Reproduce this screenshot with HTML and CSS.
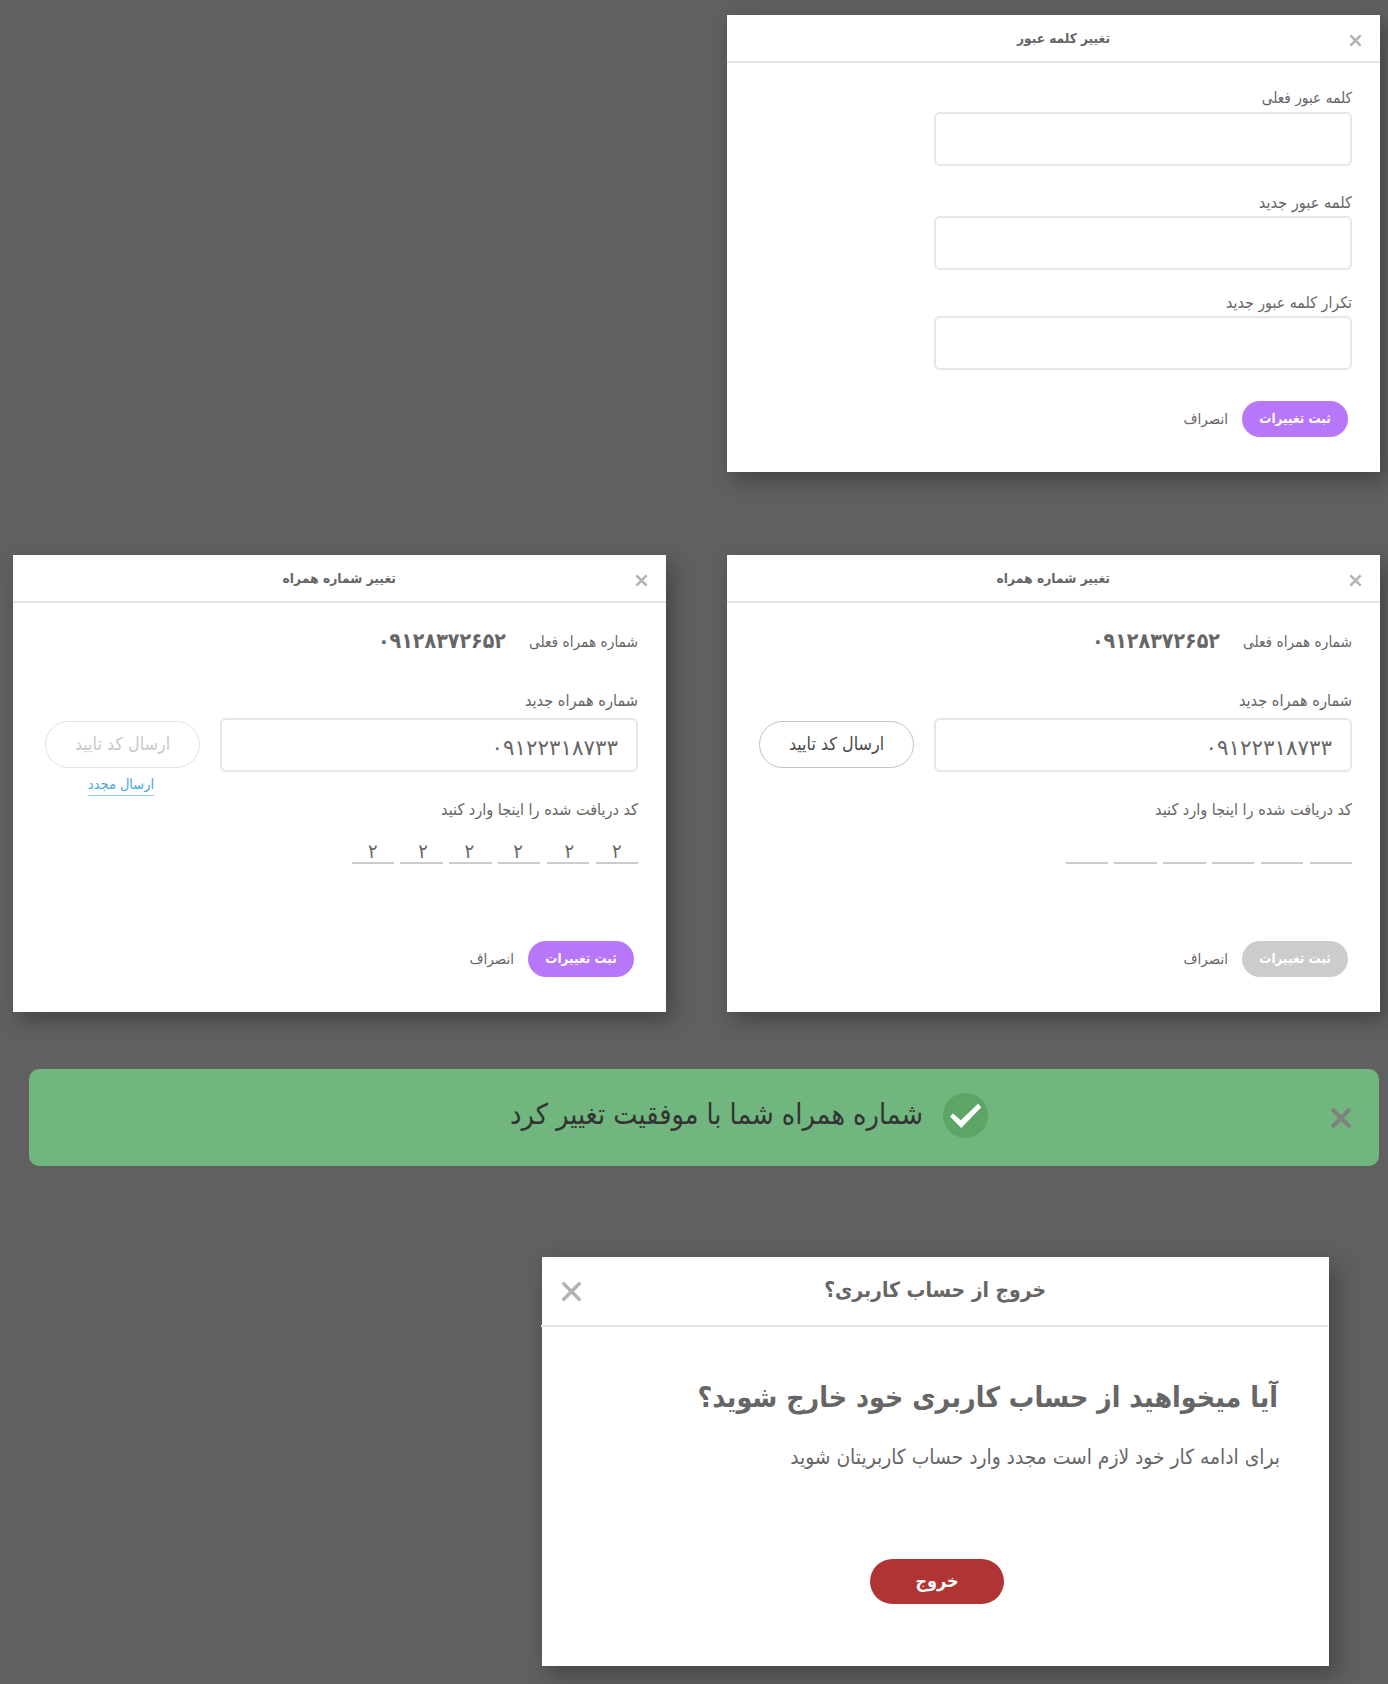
FILE: index.html
```html
<!DOCTYPE html>
<html lang="fa" dir="rtl">
<head>
<meta charset="utf-8">
<title>تنظیمات حساب کاربری</title>
<link rel="stylesheet" href="styles.css">
</head>
<body>
<main class="page">
  <section class="row row-single">
    <article class="card">
      <header class="card-header">
        <svg class="close" viewBox="0 0 13 13"><path d="M1.4 1.4 11.6 11.6M11.6 1.4 1.4 11.6"/></svg>
        <h2 class="card-title">تغییر کلمه عبور</h2>
      </header>
      <div class="card-body">
        <div class="field">
          <label class="label label-current">کلمه عبور فعلی</label>
          <div class="input"></div>
        </div>
        <div class="field field-new">
          <label class="label">کلمه عبور جدید</label>
          <div class="input"></div>
        </div>
        <div class="field field-repeat">
          <label class="label label-repeat">تکرار کلمه عبور جدید</label>
          <div class="input"></div>
        </div>
        <div class="actions">
          <span class="btn">ثبت تغییرات</span>
          <span class="cancel">انصراف</span>
        </div>
      </div>
    </article>
  </section>

  <section class="row row-double">
    <article class="card">
      <header class="card-header">
        <svg class="close" viewBox="0 0 13 13"><path d="M1.4 1.4 11.6 11.6M11.6 1.4 1.4 11.6"/></svg>
        <h2 class="card-title title-phone">تغییر شماره همراه</h2>
      </header>
      <div class="card-body">
        <div class="current">
          <span class="label label-current">شماره همراه فعلی</span>
          <strong class="current-number">۰۹۱۲۸۳۷۲۶۵۲</strong>
        </div>
        <label class="label label-phone">شماره همراه جدید</label>
        <div class="phone-row">
          <div class="input phone">۰۹۱۲۲۳۱۸۷۳۳</div>
          <div class="send-col">
            <span class="send">ارسال کد تایید</span>
          </div>
        </div>
        <label class="label label-code">کد دریافت شده را اینجا وارد کنید</label>
        <div class="code"><i></i><i></i><i></i><i></i><i></i><i></i></div>
        <div class="actions actions-phone">
          <span class="btn btn-disabled">ثبت تغییرات</span>
          <span class="cancel">انصراف</span>
        </div>
      </div>
    </article>

    <article class="card">
      <header class="card-header">
        <svg class="close" viewBox="0 0 13 13"><path d="M1.4 1.4 11.6 11.6M11.6 1.4 1.4 11.6"/></svg>
        <h2 class="card-title title-phone">تغییر شماره همراه</h2>
      </header>
      <div class="card-body">
        <div class="current">
          <span class="label label-current">شماره همراه فعلی</span>
          <strong class="current-number">۰۹۱۲۸۳۷۲۶۵۲</strong>
        </div>
        <label class="label label-phone">شماره همراه جدید</label>
        <div class="phone-row">
          <div class="input phone">۰۹۱۲۲۳۱۸۷۳۳</div>
          <div class="send-col">
            <span class="send send-disabled">ارسال کد تایید</span>
            <a class="resend">ارسال مجدد</a>
          </div>
        </div>
        <label class="label label-code">کد دریافت شده را اینجا وارد کنید</label>
        <div class="code"><i>۲</i><i class="nudge">۲</i><i class="back">۲</i><i class="back">۲</i><i class="nudge">۲</i><i>۲</i></div>
        <div class="actions actions-phone">
          <span class="btn">ثبت تغییرات</span>
          <span class="cancel">انصراف</span>
        </div>
      </div>
    </article>
  </section>

  <section class="banner">
    <svg class="banner-close" viewBox="0 0 22 22"><path d="M2 2 20 20M20 2 2 20"/></svg>
    <svg class="banner-check" viewBox="0 0 45 45"><circle cx="22.5" cy="22.5" r="22.5"/><path d="M7 23.6 10 20.5 17.8 27.2 35 10.7 38.3 14.2 18.2 35Z"/></svg>
    <p class="banner-text">شماره همراه شما با موفقیت تغییر کرد</p>
  </section>

  <section class="dialog">
    <header class="dialog-header">
      <h2 class="dialog-title">خروج از حساب کاربری؟</h2>
      <svg class="dialog-close" viewBox="0 0 19 19"><path d="M1.8 1.8 17.2 17.2M17.2 1.8 1.8 17.2"/></svg>
    </header>
    <h3 class="dialog-question">آیا میخواهید از حساب کاربری خود خارج شوید؟</h3>
    <p class="dialog-note">برای ادامه کار خود لازم است مجدد وارد حساب کاربریتان شوید</p>
    <span class="logout">خروج</span>
  </section>
</main>
</body>
</html>
```
FILE: styles.css
```css
* { box-sizing: border-box; }
body {
  margin: 0;
  background: #606060;
  color: #666;
  font-family: "DejaVu Sans Condensed", "DejaVu Sans", sans-serif;
  font-stretch: condensed;
  white-space: nowrap;
}
h2, h3, p { margin: 0; }
svg { display: block; flex: none; }
.page { width: 1388px; height: 1684px; padding-top: 15px; overflow: hidden; }
.row { display: flex; padding: 0 8px 0 13px; justify-content: space-between; }
.row-double { margin-top: 83px; }

.card {
  width: 653px;
  height: 457px;
  background: #fff;
  box-shadow: 6px 8px 20px rgba(0, 0, 0, .3);
}
.card-header {
  display: flex;
  align-items: flex-start;
  height: 48px;
  padding-right: 18px;
  border-bottom: 2px solid #e6e6e6;
}
.close { width: 13px; height: 13px; margin-top: 19px; fill: none; stroke: #b3b3b3; stroke-width: 2.6; }
.card-title { margin-right: 239px; font-size: 13.54px; line-height: 47px; }
.title-phone { font-size: 13.73px; }
.card-body { padding: 23px 28px 0; }

.label { display: block; font-size: 16.2px; line-height: 25px; height: 24px; }
.label-current { font-size: 15.25px; }
.label-repeat { font-size: 15.8px; }
.input {
  width: 418px;
  height: 54px;
  border: 2px solid #e6e6e6;
  border-radius: 6px;
}
.field .input { margin-top: 2px; }
.field-new { margin-top: 24px; }
.field-repeat { margin-top: 20px; }

.actions { display: flex; margin-top: 31px; padding-right: 4px; line-height: 36px; }
.actions-phone { margin-top: 77px; }
.btn {
  width: 106px;
  height: 36px;
  border-radius: 18px;
  background: #b877f8;
  color: #fff;
  font-size: 13.43px;
  font-weight: 700;
  text-align: center;
}
.btn-disabled { background: #ccc; }
.cancel { margin-right: 14px; font-size: 15px; line-height: 37px; }

.current { display: flex; align-items: flex-start; height: 30px; }
.current .label { line-height: 32px; }
.current-number { margin-right: 23px; font-size: 21.2px; line-height: 30px; }
.label-phone { margin-top: 32px; }
.phone-row { display: flex; gap: 20px; height: 54px; margin-top: 6px; }
.phone {
  padding: 3px 18px 0 0;
  font-family: "DejaVu Sans", sans-serif;
  font-stretch: normal;
  font-size: 21.4px;
  line-height: 50px;
}
.send-col { display: flex; flex-direction: column; align-items: center; width: 155px; padding-top: 3px; }
.send {
  flex: none;
  width: 155px;
  height: 47px;
  border: 1px solid #c4c4c4;
  border-radius: 24px;
  color: #484848;
  font-size: 17.8px;
  line-height: 43px;
  text-align: center;
}
.send-disabled { border-color: #e2e2e2; color: #c8c8c8; }
.resend {
  flex: none;
  height: 23px;
  margin: 5px 3px 0 0;
  border-bottom: 1px solid #8ecbee;
  color: #45a7dc;
  font-size: 14.4px;
  line-height: 23px;
}
.label-code { margin-top: 25px; font-size: 16.07px; }
.code { display: flex; gap: 6.3px; margin-top: 11px; }
.code i {
  width: 42.5px;
  height: 32px;
  padding-top: 6px;
  border-bottom: 2px solid #ccc;
  font-size: 20px;
  font-style: normal;
  line-height: 27px;
  text-align: center;
}
.code .nudge { padding-left: 3px; }
.code .back { padding-right: 2px; }

.banner {
  display: flex;
  align-items: flex-start;
  height: 97px;
  margin: 57px 9px 0 29px;
  padding-right: 27px;
  border-radius: 10px;
  background: #71b57f;
  color: #333;
}
.banner-close { width: 22px; height: 22px; margin-top: 38px; fill: none; stroke: #808080; stroke-width: 4; }
.banner-check { width: 45px; height: 45px; margin: 24px 342px 0 20px; }
.banner-check circle { fill: #5ca566; }
.banner-check path { fill: #fff; }
.banner-text { font-size: 28.5px; line-height: 91px; }

.dialog {
  width: 787px;
  height: 409px;
  margin: 91px 59px 0 0;
  background: #fff;
  box-shadow: 7px 9px 22px rgba(0, 0, 0, .3);
}
.dialog-header {
  display: flex;
  justify-content: space-between;
  width: 787px;
  height: 70px;
  margin-right: 1px;
  padding: 0 282px 0 21px;
  border-bottom: 2px solid #e6e6e6;
}
.dialog-title { font-size: 20.92px; line-height: 66px; }
.dialog-close { width: 19px; height: 19px; margin-top: 25px; fill: none; stroke: #b3b3b3; stroke-width: 3.4; stroke-linecap: round; }
.dialog-question { margin: 51px 51px 0 0; font-size: 28.3px; line-height: 40px; }
.dialog-note { margin: 24px 49px 0 0; font-size: 20.77px; line-height: 30px; }
.logout {
  display: block;
  width: 134px;
  height: 45px;
  margin: 87px 325px 0 0;
  border-radius: 22.5px;
  background: #b13434;
  color: #fff;
  font-size: 17.8px;
  font-weight: 700;
  line-height: 44px;
  text-align: center;
}
```
